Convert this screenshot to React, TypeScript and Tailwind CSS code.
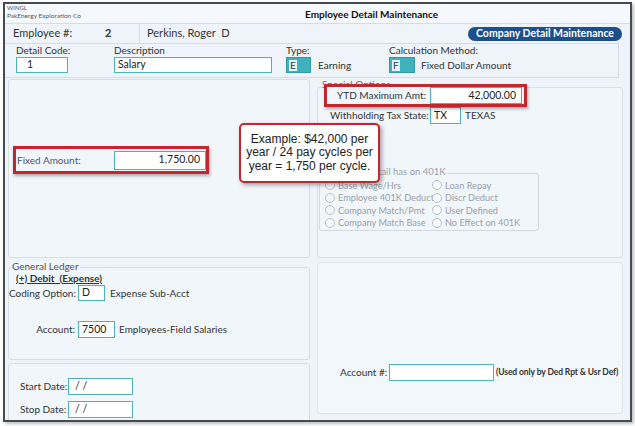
import React from "react";

type FieldProps = { value?: string; className?: string; right?: boolean };

const Field = ({ value = "", className = "", right = false }: FieldProps) => (
  <div
    className={`shrink-0 border-[1.5px] border-[#4cb3bd] bg-white flex items-center px-[3px] text-[10.5px] text-[#222] ${
      right ? "justify-end" : ""
    } ${className}`}
  >
    {value}
  </div>
);

const Radio = ({ label }: { label: string }) => (
  <div className="flex items-center gap-[3px] h-[12.5px]">
    <span className="shrink-0 w-[10px] h-[10px] rounded-full border border-[#b9c1ca] bg-[#f6f9fb]" />
    <span className="text-[9.2px] text-[#98a1ab] leading-none">{label}</span>
  </div>
);

export default function App() {
  return (
    <div className="w-[635px] h-[426px] bg-white pl-[3px] pt-[2px] font-['Lato',sans-serif] text-[#333] whitespace-nowrap">
      <div className="relative w-[629px] h-[420px] border-2 border-[#474b56] bg-[#eef4fa] shadow-[2px_2px_3px_rgba(0,0,0,0.25)] overflow-hidden">
        {/* title strip */}
        <div className="h-[20px] bg-[#f5f9fd] border-b border-[#d6dce3] flex">
          <div className="w-[300px] pl-[2px] pt-[1px] leading-none text-[6px] text-[#555]">
            <div>WINGL</div>
            <div className="mt-[2px] text-[6.5px]">PakEnergy Exploration Co</div>
          </div>
          <div className="text-[10px] font-bold text-[#111] leading-[20px]">Employee Detail Maintenance</div>
        </div>

        {/* employee row */}
        <div className="h-[19px] flex text-[11px]">
          <div className="w-[135px] h-full flex items-center border-r border-[#d6dce3]">
            <span className="ml-[8px] w-[92px] shrink-0">Employee #:</span>
            <span className="font-bold">2</span>
          </div>
          <span className="ml-[7px] self-center">Perkins, Roger&nbsp; D</span>
          <div className="ml-auto mr-[8px] mt-[3px] h-[14px] w-[154px] rounded-[7px] bg-[#1c4f8b] text-white text-[10.5px] font-bold flex items-center justify-center">
            Company Detail Maintenance
          </div>
        </div>

        {/* detail code row */}
        <div className="h-[35px] w-[614px] border border-l-0 border-[#d6dce3] flex text-[10px]">
          <div className="ml-[11px] w-[98px] flex flex-col">
            <div className="h-[13px] leading-[13px]">Detail Code:</div>
            <Field className="w-[52px] h-[16px] pl-[10px]" value="1" />
          </div>
          <div className="w-[172px] flex flex-col">
            <div className="h-[13px] leading-[13px]">Description</div>
            <Field className="w-[158px] h-[16px]" value="Salary" />
          </div>
          <div className="w-[103px] flex flex-col">
            <div className="h-[13px] leading-[13px]">Type:</div>
            <div className="flex items-center">
              <div className="w-[25px] h-[16px] bg-[#3eb2bd] border border-[#2f9aa5] flex items-center pl-[2px]">
                <span className="bg-[#e9f6f8] text-[#1d3b66] text-[10px] leading-[11px] px-[1px]">E</span>
              </div>
              <span className="ml-[7px]">Earning</span>
            </div>
          </div>
          <div className="flex flex-col">
            <div className="h-[13px] leading-[13px]">Calculation Method:</div>
            <div className="flex items-center">
              <div className="w-[26px] h-[16px] bg-[#3eb2bd] border border-[#2f9aa5] flex items-center pl-[2px]">
                <span className="bg-[#e9f6f8] text-[#1d3b66] text-[10px] leading-[11px] px-[1px]">F</span>
              </div>
              <span className="ml-[6px]">Fixed Dollar Amount</span>
            </div>
          </div>
        </div>

        {/* middle panels */}
        <div className="flex">
          <div className="ml-[3px] mt-[1px] w-[302px] h-[179px] border border-[#d9dee5] rounded-[3px] bg-[#f1f6fb] pt-[66px] pl-[4px]">
            <div className="w-[196px] h-[28px] border-[3px] border-[#c3262c] shadow-[1px_2px_3px_rgba(0,0,0,0.3)] flex items-center">
              <span className="ml-[1px] w-[97px] shrink-0 text-[10px] text-[#4a5968]">Fixed Amount:</span>
              <Field className="w-[92px] h-[19px] pr-[5px]" right value="1,750.00" />
            </div>
          </div>

          <div className="relative ml-[7px] mt-[9px] w-[306px] h-[171px] border border-[#d9dee5] rounded-[3px] bg-[#f1f6fb] text-[10px]">
            <span className="absolute left-[4px] top-[-9px] text-[10px] text-[#666] leading-none">Special Options</span>
            <div className="relative -mt-[4px] ml-[6px] w-[203px] h-[23px] border-[3px] border-[#c3262c] bg-[#f1f6fb] shadow-[1px_2px_3px_rgba(0,0,0,0.3)] flex items-center">
              <span className="ml-[10px] w-[93px] shrink-0">YTD Maximum Amt:</span>
              <Field className="w-[92px] h-[17px] pr-[5px]" right value="42,000.00" />
            </div>
            <div className="h-[17px] flex items-center">
              <span className="ml-[12px] w-[100px] shrink-0">Withholding Tax State:</span>
              <Field className="w-[31px] h-[17px] px-[2px]" value="TX" />
              <span className="ml-[4px]">TEXAS</span>
            </div>
            <div className="relative ml-[1px] mt-[49px] w-[220px] h-[58px] border border-[#d3d9e0] rounded-[3px] pt-[5px] pl-[5px] grid grid-cols-[107px_1fr]">
              <span className="absolute left-[18px] top-[-7px] bg-[#f1f6fb] px-[1px] text-[9.5px] text-[#9aa2ab] leading-none">Effect Detail has on 401K</span>
              <div className="flex flex-col">
                <Radio label="Base Wage/Hrs" />
                <Radio label="Employee 401K Deduct" />
                <Radio label="Company Match/Pmt" />
                <Radio label="Company Match Base" />
              </div>
              <div className="flex flex-col">
                <Radio label="Loan Repay" />
                <Radio label="Discr Deduct" />
                <Radio label="User Defined" />
                <Radio label="No Effect on 401K" />
              </div>
            </div>
          </div>
        </div>

        {/* bottom panels */}
        <div className="flex text-[10px]">
          <div className="ml-[3px] w-[302px] flex flex-col">
            <div className="relative mt-[9px] h-[93px] border border-[#d9dee5] rounded-[3px] bg-[#f1f6fb]">
              <span className="absolute left-[3px] top-[-7px] bg-[#f1f6fb] pr-[1px] text-[10px] text-[#555] leading-none">General Ledger</span>
              <div className="pt-[4px] pl-[7px] h-[17px] text-[10px] font-bold underline leading-[13px]">(+) Debit&nbsp; (Expense)</div>
              <div className="h-[16px] flex items-center">
                <span className="w-[69px] shrink-0">Coding Option:</span>
                <Field className="w-[27px] h-[16px]" value="D" />
                <span className="ml-[5px]">Expense Sub-Acct</span>
              </div>
              <div className="mt-[20px] h-[17px] flex items-center">
                <span className="w-[69px] shrink-0 text-right pr-[3px]">Account:</span>
                <Field className="w-[37px] h-[17px] px-[2px]" value="7500" />
                <span className="ml-[4px]">Employees-Field Salaries</span>
              </div>
            </div>
            <div className="mt-[3px] h-[70px] border border-[#d9dee5] rounded-[3px] bg-[#f1f6fb] pt-[14px]">
              <div className="h-[17px] flex items-center">
                <span className="ml-[11px] w-[48px] shrink-0">Start Date:</span>
                <Field className="w-[65px] h-[17px] pl-[6px]" value="/ /" />
              </div>
              <div className="mt-[6px] h-[17px] flex items-center">
                <span className="ml-[11px] w-[48px] shrink-0">Stop Date:</span>
                <Field className="w-[65px] h-[17px] pl-[6px]" value="/ /" />
              </div>
            </div>
          </div>

          <div className="ml-[7px] mt-[4px] w-[306px] h-[152px] border border-[#dfe4ea] rounded-[3px] bg-[#f2f7fc] pt-[101px]">
            <div className="h-[17px] flex items-center">
              <span className="ml-[22px] w-[49px] shrink-0">Account #:</span>
              <Field className="w-[105px] h-[17px]" value="" />
              <span className="ml-[2px] text-[8.5px] font-bold text-[#333] tracking-[-0.1px]">(Used only by Ded Rpt &amp; Usr Def)</span>
            </div>
          </div>
        </div>

        {/* callout */}
        <div className="absolute left-[234px] top-[119px] w-[141px] h-[60px] border-2 border-[#c3262c] rounded-[5px] bg-white shadow-[2px_2px_4px_rgba(0,0,0,0.35)] flex items-center justify-center text-center font-['Liberation_Sans',Arial,sans-serif] text-[12px] leading-[13.5px] text-[#222]">
          <div>
            Example: $42,000 per
            <br />
            year / 24 pay cycles per
            <br />
            year = 1,750 per cycle.
          </div>
        </div>
      </div>
    </div>
  );
}
